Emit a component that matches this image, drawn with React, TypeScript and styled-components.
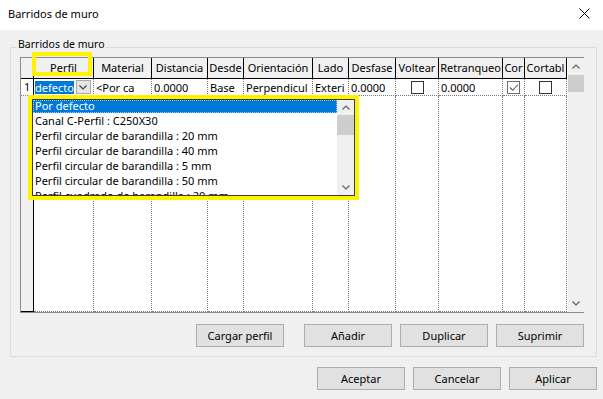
import React from "react";
import styled, { createGlobalStyle } from "styled-components";

const GlobalStyle = createGlobalStyle`
  html, body { margin: 0; padding: 0; }
  body {
    font-family: "Noto Sans", "Open Sans", sans-serif;
    font-size: 11px;
    color: #000;
    background: #f0f0f0;
  }
  * { box-sizing: border-box; }
`;

const Window = styled.div`
  position: relative;
  width: 603px;
  height: 399px;
  background: #f0f0f0;
  display: flex;
  flex-direction: column;
  overflow: hidden;
`;

const TitleBar = styled.div`
  height: 30px;
  flex-shrink: 0;
  background: #fff;
  display: flex;
  align-items: center;
  justify-content: space-between;
  padding: 0 13px 3px 8px;
  font-size: 11px;
`;

const CloseIcon = styled.svg`
  width: 11px;
  height: 11px;
`;

const Group = styled.fieldset`
  margin: 10px 6px 0 10px;
  padding: 3px 12px 9px 9px;
  border: 1px solid #dcdcdc;
  min-width: 0;
  display: flex;
  flex-direction: column;
`;

const Legend = styled.legend`
  margin-left: -3px;
  padding: 0 1px 5px;
  font-size: 10.5px;
  line-height: 9px;
`;

const Table = styled.div`
  height: 256px;
  border: 1px solid #8c8c8c;
  background: #fff;
  display: flex;
`;

const Grid = styled.div`
  width: 546px;
  display: grid;
  grid-template-columns: 13px 60px 58px 56px 36px 69px 36px 47px 43px 64px 22px 42px;
  grid-template-rows: 21px 17px 1fr;
`;

const HeadCell = styled.div`
  background: #f0f0f0;
  border-right: 1px solid #000;
  border-bottom: 1px solid #000;
  padding-top: 3px;
  line-height: 14px;
  text-align: center;
  overflow: hidden;
  word-break: break-all;
`;

const RowHead = styled.div<{ $filler?: boolean }>`
  background: ${(p) => (p.$filler ? "#f0f0f0" : "#fff")};
  border-right: 1px solid #000;
  border-bottom: 1px ${(p) => (p.$filler ? "solid #000" : "dotted #7a7a7a")};
  padding-left: 3px;
  line-height: 16px;
`;

const Cell = styled.div<{ $center?: boolean }>`
  border-right: 1px dotted #7a7a7a;
  border-bottom: 1px dotted #7a7a7a;
  padding: 0 ${(p) => (p.$center ? "0" : "2px")};
  display: flex;
  align-items: center;
  justify-content: ${(p) => (p.$center ? "center" : "flex-start")};
  white-space: nowrap;
  overflow: hidden;
`;

const EditCell = styled(Cell)`
  padding: 0 0 0 1px;
  gap: 2px;
`;

const SelectedText = styled.span`
  background: #0078d7;
  color: #fff;
  line-height: 13px;
`;

const ComboButton = styled.span`
  width: 15px;
  height: 14px;
  border: 1px solid #a9a9a9;
  background: #e6e6e6;
  display: flex;
  align-items: center;
  justify-content: center;
`;

const Check = styled.span<{ $checked?: boolean }>`
  width: 13px;
  height: 13px;
  border: 1px solid ${(p) => (p.$checked ? "#6e6e6e" : "#333")};
  background: #fff;
  display: flex;
  align-items: center;
  justify-content: center;
`;

const VScroll = styled.div<{ $width: number }>`
  width: ${(p) => p.$width}px;
  flex-shrink: 0;
  background: #f0f0f0;
  display: flex;
  flex-direction: column;
`;

const TableScroll = styled(VScroll)`
  margin-left: 1px;
`;

const ScrollArrow = styled.div<{ $h: number }>`
  height: ${(p) => p.$h}px;
  flex-shrink: 0;
  display: flex;
  align-items: center;
  justify-content: center;
`;

const Thumb = styled.div<{ $h: number }>`
  height: ${(p) => p.$h}px;
  flex-shrink: 0;
  background: #cdcdcd;
`;

const Track = styled.div`
  flex: 1;
`;

const ButtonRow = styled.div<{ $top: number }>`
  display: flex;
  justify-content: flex-end;
  gap: 8px;
  margin-top: ${(p) => p.$top}px;
`;

const DialogButtons = styled(ButtonRow)`
  padding-right: 6px;
`;

const Button = styled.button<{ $spaced?: boolean }>`
  width: 88px;
  height: 23px;
  padding: 0;
  margin-right: ${(p) => (p.$spaced ? "12px" : "0")};
  background: #e1e1e1;
  border: 1px solid #adadad;
  font-family: inherit;
  font-size: 11px;
  color: #000;
`;

const HeaderCallout = styled.div`
  position: absolute;
  left: 32px;
  top: 52px;
  width: 60px;
  height: 24px;
  border: 4px solid #fff200;
`;

const Popup = styled.div`
  position: absolute;
  left: 28px;
  top: 95px;
  width: 331px;
  height: 105px;
  border: 4px solid #fff200;
  background: #fff;
`;

const ListBox = styled.div`
  height: 100%;
  border: 1px solid #3c3c3c;
  display: flex;
  overflow: hidden;
  background: #fff;
`;

const Options = styled.div`
  flex: 1;
  display: flex;
  flex-direction: column;
  gap: 2px;
  overflow: hidden;
`;

const Option = styled.div<{ $selected?: boolean }>`
  height: 13px;
  flex-shrink: 0;
  line-height: 10px;
  padding-left: 1px;
  white-space: nowrap;
  background: ${(p) => (p.$selected ? "#0078d7" : "transparent")};
  color: ${(p) => (p.$selected ? "#fff" : "#000")};
  border: 1px dotted ${(p) => (p.$selected ? "#9cc7ee" : "transparent")};
`;

const Chevron = ({ up, color = "#606060" }: { up?: boolean; color?: string }) => (
  <svg width="8" height="5" viewBox="0 0 8 5">
    <polyline
      points={up ? "0.5,4.5 4,1 7.5,4.5" : "0.5,0.5 4,4 7.5,0.5"}
      fill="none"
      stroke={color}
      strokeWidth="1.2"
    />
  </svg>
);

const CheckMark = () => (
  <svg width="10" height="9" viewBox="0 0 10 9">
    <polyline points="1,4.5 3.8,7.3 9,1.5" fill="none" stroke="#5a5a5a" strokeWidth="1.1" />
  </svg>
);

const headers = [
  "",
  "Perfil",
  "Material",
  "Distancia",
  "Desde",
  "Orientación",
  "Lado",
  "Desfase",
  "Voltear",
  "Retranqueo",
  "Corta muro",
  "Cortable",
];

const options = [
  "Por defecto",
  "Canal C-Perfil : C250X30",
  "Perfil circular de barandilla : 20 mm",
  "Perfil circular de barandilla : 40 mm",
  "Perfil circular de barandilla : 5 mm",
  "Perfil circular de barandilla : 50 mm",
  "Perfil cuadrado de barandilla : 20 mm",
];

export default function App() {
  return (
    <Window>
      <GlobalStyle />
      <TitleBar>
        <span>Barridos de muro</span>
        <CloseIcon viewBox="0 0 11 11">
          <path d="M0.5 0.5 L10.5 10.5 M10.5 0.5 L0.5 10.5" stroke="#000" strokeWidth="1" />
        </CloseIcon>
      </TitleBar>

      <Group>
        <Legend>Barridos de muro</Legend>
        <Table>
          <Grid>
            {headers.map((h, i) => (
              <HeadCell key={i}>{h}</HeadCell>
            ))}

            <RowHead>1</RowHead>
            <EditCell>
              <SelectedText>defecto</SelectedText>
              <ComboButton>
                <Chevron color="#444" />
              </ComboButton>
            </EditCell>
            <Cell>&lt;Por ca</Cell>
            <Cell>0.0000</Cell>
            <Cell>Base</Cell>
            <Cell>Perpendicul</Cell>
            <Cell>Exteri</Cell>
            <Cell>0.0000</Cell>
            <Cell $center>
              <Check />
            </Cell>
            <Cell>0.0000</Cell>
            <Cell $center>
              <Check $checked>
                <CheckMark />
              </Check>
            </Cell>
            <Cell $center>
              <Check />
            </Cell>

            <RowHead $filler />
            {headers.slice(1).map((h) => (
              <Cell key={h} />
            ))}
          </Grid>
          <TableScroll $width={16}>
            <ScrollArrow $h={17}>
              <Chevron up />
            </ScrollArrow>
            <Thumb $h={17} />
            <Track />
            <ScrollArrow $h={17}>
              <Chevron />
            </ScrollArrow>
          </TableScroll>
        </Table>

        <ButtonRow $top={11}>
          <Button $spaced>Cargar perfil</Button>
          <Button>Añadir</Button>
          <Button>Duplicar</Button>
          <Button>Suprimir</Button>
        </ButtonRow>
      </Group>

      <DialogButtons $top={10}>
        <Button>Aceptar</Button>
        <Button>Cancelar</Button>
        <Button>Aplicar</Button>
      </DialogButtons>

      <HeaderCallout />
      <Popup>
        <ListBox>
          <Options>
            {options.map((o, i) => (
              <Option key={o} $selected={i === 0}>
                {o}
              </Option>
            ))}
          </Options>
          <VScroll $width={17}>
            <ScrollArrow $h={15}>
              <Chevron up />
            </ScrollArrow>
            <Thumb $h={20} />
            <Track />
            <ScrollArrow $h={15}>
              <Chevron />
            </ScrollArrow>
          </VScroll>
        </ListBox>
      </Popup>
    </Window>
  );
}
